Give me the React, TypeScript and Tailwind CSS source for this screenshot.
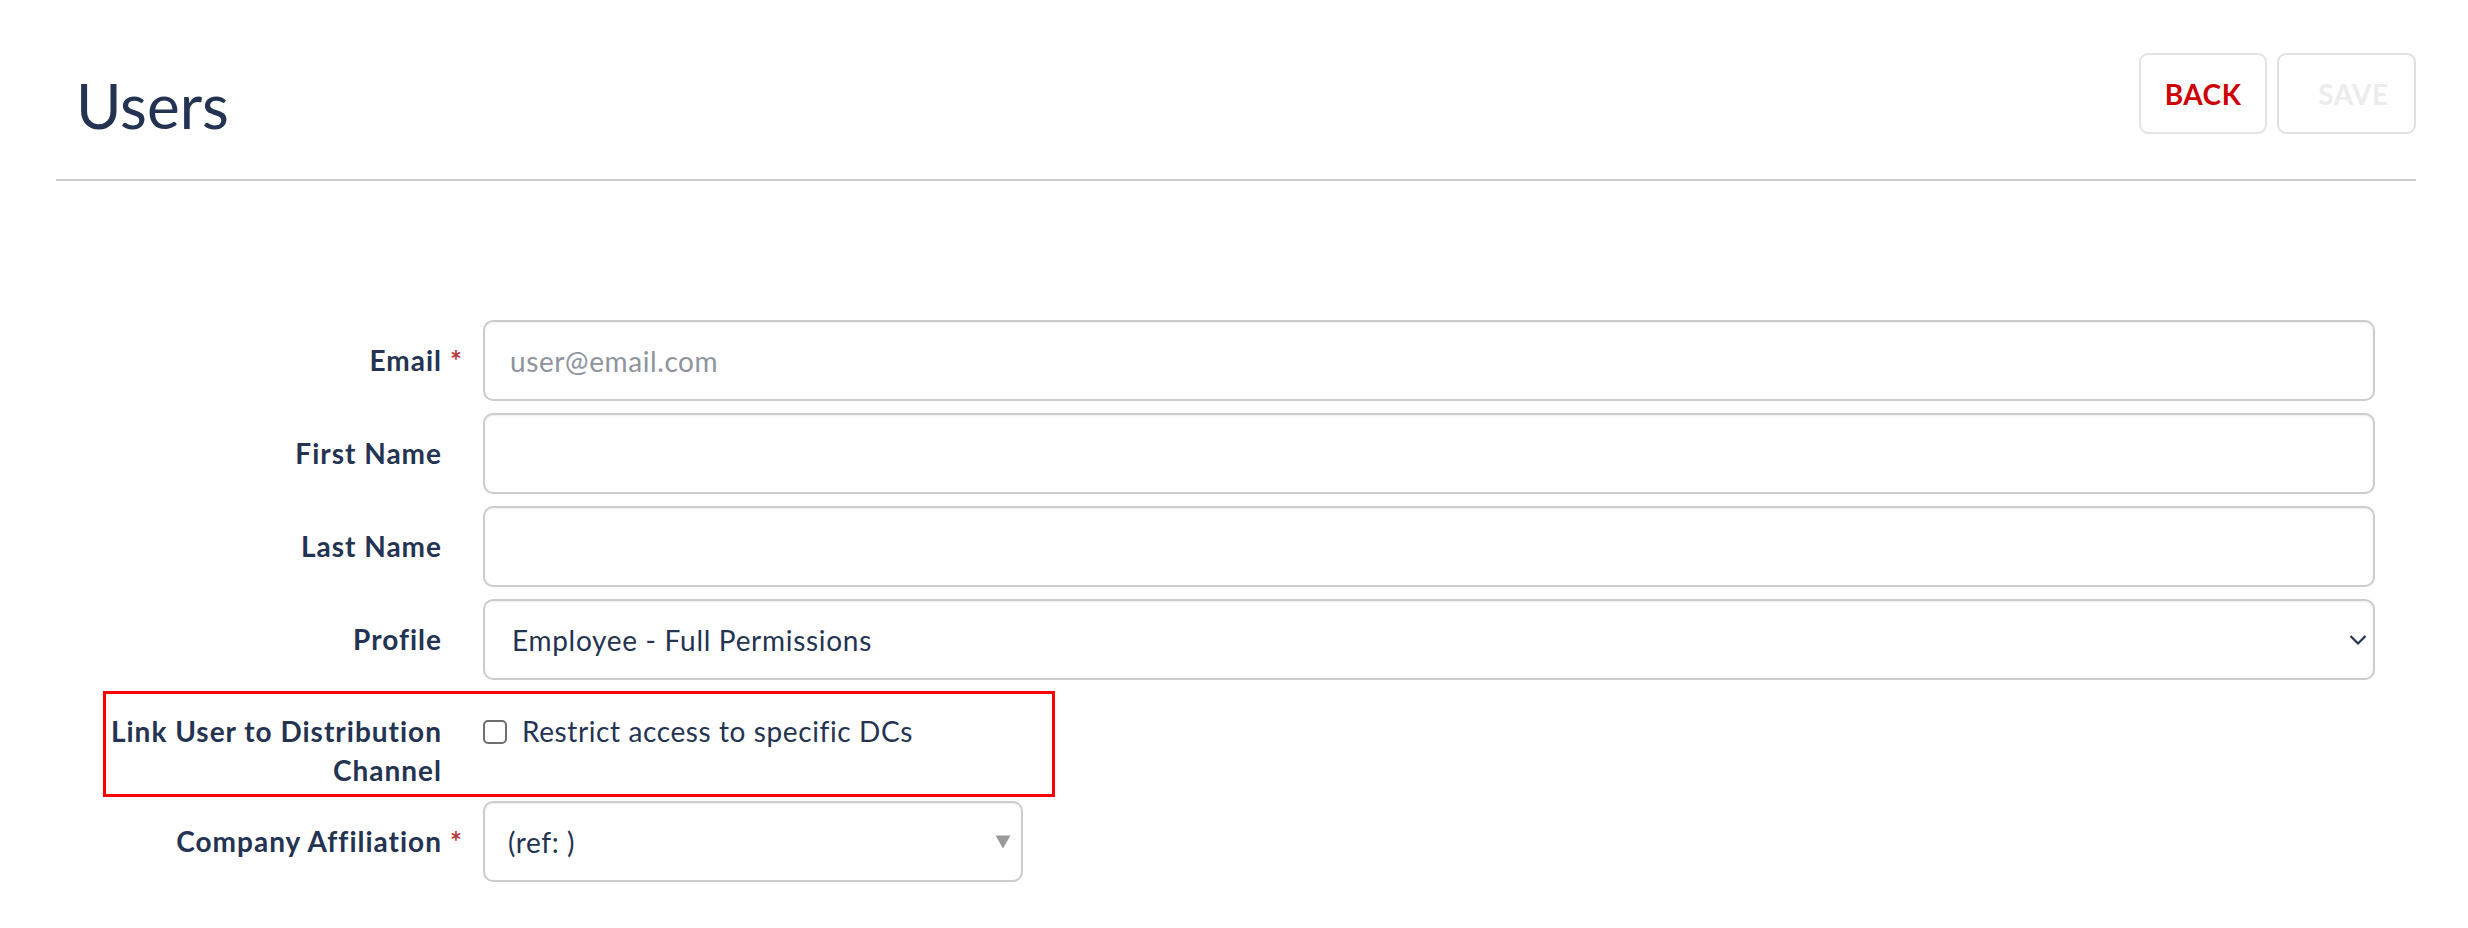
import { useState } from "react";

const font = { fontFamily: "Lato, 'Open Sans', sans-serif" };

function FieldLabel({ text, required, width = "w-[406px]" }: { text: string; required?: boolean; width?: string }) {
  return (
    <div className={`${width} shrink-0 flex justify-end items-center`}>
      <span className="flex-1 text-right font-bold text-[28px] leading-[39px] tracking-[1px] text-[#243352]">{text}</span>
      <span className="w-[20px] shrink-0 text-right font-bold text-[28px] leading-[39px] text-[#b73a3a]">
        {required ? "*" : ""}
      </span>
    </div>
  );
}

function TextRow({ label, required, placeholder }: { label: string; required?: boolean; placeholder?: string }) {
  return (
    <div className="flex items-center gap-[21px]">
      <FieldLabel text={label} required={required} />
      <input
        type="text"
        placeholder={placeholder}
        className="flex-1 h-[81px] border-2 border-[#cccccc] rounded-[10px] px-[25px] text-[28px] tracking-[0.6px] text-[#243352] placeholder:text-[#8e949c] shadow-[inset_0_1px_2px_rgba(0,0,0,0.07)] outline-none"
      />
    </div>
  );
}

export default function App() {
  const [restrict, setRestrict] = useState(false);

  return (
    <div className="min-h-[928px] bg-white pl-[56px] pr-[52px] pt-[53px]" style={font}>
      {/* Header */}
      <div className="flex items-start justify-between border-b-2 border-[#cccccc] pb-[43px]">
        <h1 className="ml-[20px] mt-[21px] text-[62px] leading-[62px] font-normal text-[#243352]">Users</h1>
        <div className="flex gap-[10px]">
          <button className="w-[128px] h-[81px] border-2 border-[#e3e3e3] rounded-[9px] flex items-center justify-center text-[28px] font-bold tracking-[0.5px] text-[#cc0000]">
            BACK
          </button>
          <button
            disabled
            className="w-[139px] h-[81px] border-2 border-[#e0e0e0] rounded-[9px] flex items-center justify-center pl-[14px] text-[28px] font-bold tracking-[0.5px] text-[#ececec]"
          >
            SAVE
          </button>
        </div>
      </div>

      {/* Form */}
      <div className="mt-[139px] pr-[41px] flex flex-col">
        <div className="flex flex-col gap-[12px]">
          <TextRow label="Email" required placeholder="user@email.com" />
          <TextRow label="First Name" />
          <TextRow label="Last Name" />
          <div className="flex items-center gap-[21px]">
            <FieldLabel text="Profile" />
            <div className="flex-1 h-[81px] border-2 border-[#cccccc] rounded-[10px] flex items-center pl-[27px] pr-[6px] shadow-[inset_0_1px_2px_rgba(0,0,0,0.07)]">
              <select className="flex-1 appearance-none bg-transparent outline-none text-[28px] tracking-[0.7px] text-[#243352]">
                <option>Employee - Full Permissions</option>
                <option>Employee - Read Only</option>
              </select>
              <svg width="18" height="12" viewBox="0 0 18 12" className="shrink-0">
                <path d="M1.5 2 L9 9.5 L16.5 2" fill="none" stroke="#243352" strokeWidth="2.2" />
              </svg>
            </div>
          </div>
        </div>

        {/* Highlighted row */}
        <div className="mt-[11px] ml-[47px] w-[952px] border-[3px] border-[#ff0000] flex items-start gap-[21px] pt-[18px] pb-[4px]">
          <FieldLabel text="Link User to Distribution Channel" width="w-[356px]" />
          <label className="flex items-start gap-[15px] cursor-pointer">
            <input
              type="checkbox"
              checked={restrict}
              onChange={(e) => setRestrict(e.target.checked)}
              className="mt-[8px] w-[24px] h-[24px] appearance-none border-2 border-[#6e6e6e] rounded-[5px] bg-white checked:bg-[#243352]"
            />
            <span className="text-[28px] leading-[39px] tracking-[0.6px] text-[#243352]">Restrict access to specific DCs</span>
          </label>
        </div>

        <div className="mt-[4px] flex items-center gap-[21px]">
          <FieldLabel text="Company Affiliation" required />
          <div className="w-[540px] h-[81px] border-2 border-[#cccccc] rounded-[10px] flex items-center pl-[23px] pr-[10px] shadow-[inset_0_1px_2px_rgba(0,0,0,0.07)]">
            <select className="flex-1 appearance-none bg-transparent outline-none text-[28px] tracking-[0.6px] text-[#243352]">
              <option>(ref: )</option>
            </select>
            <svg width="16" height="14" viewBox="0 0 16 14" className="shrink-0">
              <polygon points="0.5,0.5 15.5,0.5 8,13.5" fill="#999999" />
            </svg>
          </div>
        </div>
      </div>
    </div>
  );
}
